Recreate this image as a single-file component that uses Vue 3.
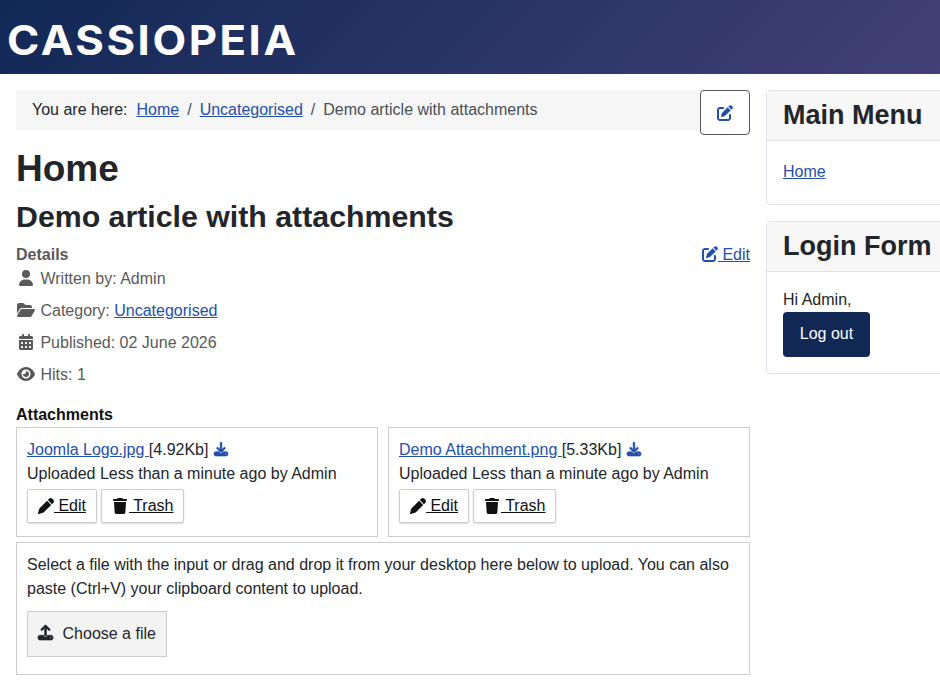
<script setup>
const icons = {
  edit: { box: '0 0 512 512', d: 'M471.6 21.7c-21.9-21.9-57.3-21.9-79.2 0L362.3 51.7l97.9 97.9 30.1-30.1c21.9-21.9 21.9-57.3 0-79.2L471.6 21.7zm-299.2 220c-6.1 6.1-10.8 13.6-13.5 21.9l-29.6 88.8c-2.9 8.6-.6 18.1 5.8 24.6s15.9 8.7 24.6 5.8l88.8-29.6c8.2-2.7 15.7-7.4 21.9-13.5L437.7 172.3 339.7 74.3 172.4 241.7zM96 64C43 64 0 107 0 160V416c0 53 43 96 96 96H352c53 0 96-43 96-96V320c0-17.7-14.3-32-32-32s-32 14.3-32 32v96c0 17.7-14.3 32-32 32H96c-17.7 0-32-14.3-32-32V160c0-17.7 14.3-32 32-32h96c17.7 0 32-14.3 32-32s-14.3-32-32-32H96z' },
  user: { box: '0 0 448 512', d: 'M224 256A128 128 0 1 0 224 0a128 128 0 1 0 0 256zm-45.7 48C79.8 304 0 383.8 0 482.3C0 498.7 13.3 512 29.7 512H418.3c16.4 0 29.7-13.3 29.7-29.7C448 383.8 368.2 304 269.7 304H178.3z' },
  folder: { box: '0 0 576 512', d: 'M88.7 223.8L0 375.8V96C0 60.7 28.7 32 64 32H181.5c17 0 33.3 6.7 45.3 18.7l26.5 26.5c12 12 28.3 18.7 45.3 18.7H416c35.3 0 64 28.7 64 64v32H144c-22.8 0-43.8 12.1-55.3 31.8zm27.6 16.1C122.1 230 132.6 224 144 224H544c11.5 0 22 6.1 27.7 16.1s5.7 22.2-.1 32.1l-112 192C453.9 474 443.4 480 432 480H32c-11.5 0-22-6.1-27.7-16.1s-5.7-22.2 .1-32.1l112-192z' },
  calendar: { box: '0 0 448 512', d: 'M128 0c17.7 0 32 14.3 32 32V64H288V32c0-17.7 14.3-32 32-32s32 14.3 32 32V64h48c26.5 0 48 21.5 48 48v48H0V112C0 85.5 21.5 64 48 64H96V32c0-17.7 14.3-32 32-32zM0 192H448V464c0 26.5-21.5 48-48 48H48c-26.5 0-48-21.5-48-48V192zm64 80v32c0 8.8 7.2 16 16 16h32c8.8 0 16-7.2 16-16V272c0-8.8-7.2-16-16-16H80c-8.8 0-16 7.2-16 16zm128 0v32c0 8.8 7.2 16 16 16h32c8.8 0 16-7.2 16-16V272c0-8.8-7.2-16-16-16H208c-8.8 0-16 7.2-16 16zm144-16c-8.8 0-16 7.2-16 16v32c0 8.8 7.2 16 16 16h32c8.8 0 16-7.2 16-16V272c0-8.8-7.2-16-16-16H336zM64 400v32c0 8.8 7.2 16 16 16h32c8.8 0 16-7.2 16-16V400c0-8.8-7.2-16-16-16H80c-8.8 0-16 7.2-16 16zm144-16c-8.8 0-16 7.2-16 16v32c0 8.8 7.2 16 16 16h32c8.8 0 16-7.2 16-16V400c0-8.8-7.2-16-16-16H208zm112 16v32c0 8.8 7.2 16 16 16h32c8.8 0 16-7.2 16-16V400c0-8.8-7.2-16-16-16H336c-8.8 0-16 7.2-16 16z' },
  eye: { box: '0 0 576 512', d: 'M288 32c-80.8 0-145.5 36.8-192.6 80.6C48.6 156 17.3 208 2.5 243.7c-3.3 7.9-3.3 16.7 0 24.6C17.3 304 48.6 356 95.4 399.4C142.5 443.2 207.2 480 288 480s145.5-36.8 192.6-80.6c46.8-43.5 78.1-95.4 93-131.1c3.3-7.9 3.3-16.7 0-24.6c-14.9-35.7-46.2-87.7-93-131.1C433.5 68.8 368.8 32 288 32zM144 256a144 144 0 1 1 288 0 144 144 0 1 1 -288 0zm144-64c0 35.3-28.7 64-64 64c-7.1 0-13.9-1.2-20.3-3.3c-5.5-1.8-11.9 1.6-11.7 7.4c.3 6.9 1.3 13.8 3.2 20.7c13.7 51.2 66.4 81.6 117.6 67.9s81.6-66.4 67.9-117.6c-11.1-41.5-47.8-69.4-88.6-71.1c-5.8-.2-9.2 6.1-7.4 11.7c2.1 6.4 3.3 13.2 3.3 20.3z' },
  download: { box: '0 0 512 512', d: 'M288 32c0-17.7-14.3-32-32-32s-32 14.3-32 32V274.7l-73.4-73.4c-12.5-12.5-32.8-12.5-45.3 0s-12.5 32.8 0 45.3l128 128c12.5 12.5 32.8 12.5 45.3 0l128-128c12.5-12.5 12.5-32.8 0-45.3s-32.8-12.5-45.3 0L288 274.7V32zM64 352c-35.3 0-64 28.7-64 64v32c0 35.3 28.7 64 64 64H448c35.3 0 64-28.7 64-64V416c0-35.3-28.7-64-64-64H346.5l-45.3 45.3c-25 25-65.5 25-90.5 0L165.5 352H64zm368 56a24 24 0 1 1 0 48 24 24 0 1 1 0-48z' },
  upload: { box: '0 0 512 512', d: 'M288 109.3V352c0 17.7-14.3 32-32 32s-32-14.3-32-32V109.3l-73.4 73.4c-12.5 12.5-32.8 12.5-45.3 0s-12.5-32.8 0-45.3l128-128c12.5-12.5 32.8-12.5 45.3 0l128 128c12.5 12.5 12.5 32.8 0 45.3s-32.8 12.5-45.3 0L288 109.3zM64 352H192c0 35.3 28.7 64 64 64s64-28.7 64-64H448c35.3 0 64 28.7 64 64v32c0 35.3-28.7 64-64 64H64c-35.3 0-64-28.7-64-64V416c0-35.3 28.7-64 64-64zM432 456a24 24 0 1 0 0-48 24 24 0 1 0 0 48z' },
  pen: { box: '0 0 512 512', d: 'M362.7 19.3L314.3 67.7 444.3 197.7l48.4-48.4c25-25 25-65.5 0-90.5L453.3 19.3c-25-25-65.5-25-90.5 0zm-71 71L58.6 323.5c-10.4 10.4-18 23.3-22.2 37.4L1 481.2C-1.5 489.7 .8 498.8 7 505s15.3 8.5 23.7 6.1l120.3-35.4c14.1-4.2 27-11.8 37.4-22.2L421.7 220.3 291.7 90.3z' },
  trash: { box: '0 0 448 512', d: 'M135.2 17.7L128 32H32C14.3 32 0 46.3 0 64S14.3 96 32 96H416c17.7 0 32-14.3 32-32s-14.3-32-32-32H320l-7.2-14.3C307.4 6.8 296.3 0 284.2 0H163.8c-12.1 0-23.2 6.8-28.6 17.7zM416 128H32L53.2 467c1.6 25.3 22.6 45 47.9 45H346.9c25.3 0 46.3-19.7 47.9-45L416 128z' },
}

const attachments = [
  { id: 1, name: 'Joomla Logo.jpg', size: '4.92Kb' },
  { id: 2, name: 'Demo Attachment.png', size: '5.33Kb' },
]
</script>

<template>
  <div class="page">
    <header class="site-header">
      <a class="brand" href="#">CASSIOPEIA</a>
    </header>

    <div class="layout">
      <main class="content">
        <nav class="breadcrumb">
          <span class="here">You are here:</span>
          <a href="#">Home</a>
          <span class="sep">/</span>
          <a href="#">Uncategorised</a>
          <span class="sep">/</span>
          <span class="current">Demo article with attachments</span>
        </nav>
        <a class="module-edit" href="#">
          <svg class="icon" :viewBox="icons.edit.box"><path :d="icons.edit.d" /></svg>
        </a>

        <h1>Home</h1>
        <h2>Demo article with attachments</h2>

        <div class="info-wrap">
          <a class="article-edit" href="#">
            <svg class="icon" :viewBox="icons.edit.box"><path :d="icons.edit.d" /></svg>
            Edit</a>
          <div class="details-title">Details</div>
          <div class="info-row">
            <span class="fw"><svg class="icon" :viewBox="icons.user.box"><path :d="icons.user.d" /></svg></span>
            Written by: Admin
          </div>
          <div class="info-row">
            <span class="fw"><svg class="icon" :viewBox="icons.folder.box"><path :d="icons.folder.d" /></svg></span>
            Category: <a href="#">Uncategorised</a>
          </div>
          <div class="info-row">
            <span class="fw"><svg class="icon" :viewBox="icons.calendar.box"><path :d="icons.calendar.d" /></svg></span>
            Published: 02 June 2026
          </div>
          <div class="info-row">
            <span class="fw"><svg class="icon" :viewBox="icons.eye.box"><path :d="icons.eye.d" /></svg></span>
            Hits: 1
          </div>
        </div>

        <div class="attachments-title">Attachments</div>
        <div class="attachments">
          <div class="attachment" v-for="item in attachments" :key="item.id">
            <div>
              <a href="#">{{ `${item.name} ` }}</a>[{{ item.size }}]
              <a class="dl" href="#"><svg class="icon thick" :viewBox="icons.download.box"><path :d="icons.download.d" /></svg></a>
            </div>
            <div>Uploaded Less than a minute ago by Admin</div>
            <div class="attachment-actions">
              <a class="small-btn" href="#">
                <span class="btn-icon"><svg class="icon" :viewBox="icons.pen.box"><path :d="icons.pen.d" /></svg></span>
                Edit</a>
              <a class="small-btn" href="#">
                <span class="btn-icon trash-icon"><svg class="icon" :viewBox="icons.trash.box"><path :d="icons.trash.d" /></svg></span>
                Trash</a>
            </div>
          </div>
        </div>

        <div class="upload-box">
          <p>Select a file with the input or drag and drop it from your desktop here below to upload. You can also paste (Ctrl+V) your clipboard content to upload.</p>
          <button class="choose-btn" type="button">
            <svg class="icon thick" :viewBox="icons.upload.box"><path :d="icons.upload.d" /></svg>
            Choose a file
          </button>
        </div>
      </main>

      <aside class="sidebar">
        <div class="card">
          <h3 class="card-header">Main Menu</h3>
          <div class="card-body menu-body">
            <a href="#">Home</a>
          </div>
        </div>
        <div class="card">
          <h3 class="card-header">Login Form</h3>
          <div class="card-body login-body">
            <div>Hi Admin,</div>
            <button class="logout" type="button">Log out</button>
          </div>
        </div>
      </aside>
    </div>
  </div>
</template>

<style>
html,
body {
  background: #fff;
}
</style>

<style scoped>
.page {
  width: 940px;
  height: 700px;
  overflow: hidden;
  font-family: 'Liberation Sans', Arial, sans-serif;
  font-size: 16px;
  line-height: 24px;
  color: #22262a;
}

a {
  color: #224faa;
}

.icon {
  height: 1em;
  fill: currentColor;
  vertical-align: -0.125em;
}

.icon.thick {
  stroke: currentColor;
  stroke-width: 22px;
  overflow: visible;
}

.site-header {
  height: 74px;
  box-sizing: border-box;
  padding: 6px 0 0 7px;
  background: linear-gradient(135deg, #112855 0%, #424077 100%);
  display: flex;
  align-items: center;
}

.brand {
  font-family: Inter, sans-serif;
  font-weight: 700;
  font-size: 41px;
  line-height: 1;
  letter-spacing: 2.4px;
  color: #fff;
  text-decoration: none;
  transform: scaleX(1.066);
  transform-origin: left center;
}

.layout {
  display: flex;
  gap: 16px;
  padding: 16px 0 0 16px;
}

.content {
  position: relative;
  width: 734px;
  flex: none;
}

.breadcrumb {
  height: 40px;
  padding: 8px 16px;
  box-sizing: border-box;
  background: #f6f6f6;
  color: #495057;
}

.here {
  margin-right: 9px;
  color: #22262a;
}

.sep {
  margin: 0 8px;
}

.module-edit {
  position: absolute;
  top: 0;
  right: 0;
  width: 50px;
  height: 45px;
  box-sizing: border-box;
  display: flex;
  align-items: center;
  justify-content: center;
  background: #fff;
  border: 1px solid #555;
  border-radius: 4px;
}

h1 {
  margin: 17px 0 0;
  font-size: 37px;
  line-height: 44px;
  font-weight: 700;
}

h2 {
  margin: 8px 0 0;
  font-size: 30.3px;
  line-height: 36px;
  font-weight: 700;
}

.info-wrap {
  position: relative;
  margin-top: 8px;
  color: #5a5a5a;
}

.article-edit {
  position: absolute;
  top: 0;
  right: 0;
}

.details-title {
  font-weight: 700;
}

.info-row {
  margin-bottom: 8px;
}

.fw {
  display: inline-block;
  width: 20px;
  text-align: center;
}

.attachments-title {
  margin-top: 16px;
  font-weight: 700;
  color: #111;
}

.attachments {
  display: grid;
  grid-template-columns: 362px 362px;
  gap: 10px;
}

.attachment,
.upload-box {
  border: 1px solid #ccc;
  box-sizing: border-box;
  padding: 10px 10px 13px;
  color: #22262a;
}

.dl {
  margin-left: 1px;
}

.dl .icon {
  height: 14px;
  vertical-align: -1px;
}

.attachment-actions {
  display: flex;
  gap: 4px;
  margin-top: 3px;
}

.small-btn {
  height: 34px;
  box-sizing: border-box;
  display: flex;
  align-items: center;
  padding: 0 10px;
  color: #111;
  white-space: pre;
  background: #fff;
  border: 1px solid #ccc;
  border-radius: 2px;
  box-shadow: 0 1px 2px rgba(0, 0, 0, 0.15);
}

.btn-icon {
  width: 16px;
  display: flex;
  justify-content: center;
}

.trash-icon {
  margin-right: 1px;
}

.upload-box {
  margin-top: 5px;
  padding: 10px 10px 17px;
}

.upload-box p {
  margin: 0 0 10px;
}

.choose-btn {
  width: 140px;
  height: 46px;
  font: inherit;
  color: #22262a;
  background: #f3f3f3;
  border: 1px solid #ccc;
  padding: 0;
}

.choose-btn .icon {
  height: 15px;
  margin-right: 5px;
  vertical-align: -1px;
}

.sidebar {
  width: 220px;
  flex: none;
  display: flex;
  flex-direction: column;
  gap: 16px;
}

.card {
  border: 1px solid #dfe3e7;
  border-radius: 4px;
}

.card-header {
  margin: 0;
  padding: 0 16px;
  height: 50px;
  font-size: 27px;
  line-height: 48px;
  font-weight: 700;
  background: #f7f7f7;
  border-bottom: 1px solid #dfe3e7;
  box-sizing: border-box;
}

.card-body {
  padding: 16px;
}

.menu-body {
  padding-top: 19px;
  padding-bottom: 20px;
}

.login-body {
  padding-bottom: 16px;
}

.logout {
  display: block;
  width: 87px;
  height: 45px;
  font: inherit;
  color: #fff;
  background: #112855;
  border: 0;
  border-radius: 4px;
  padding: 0 0 2px;
}
</style>
